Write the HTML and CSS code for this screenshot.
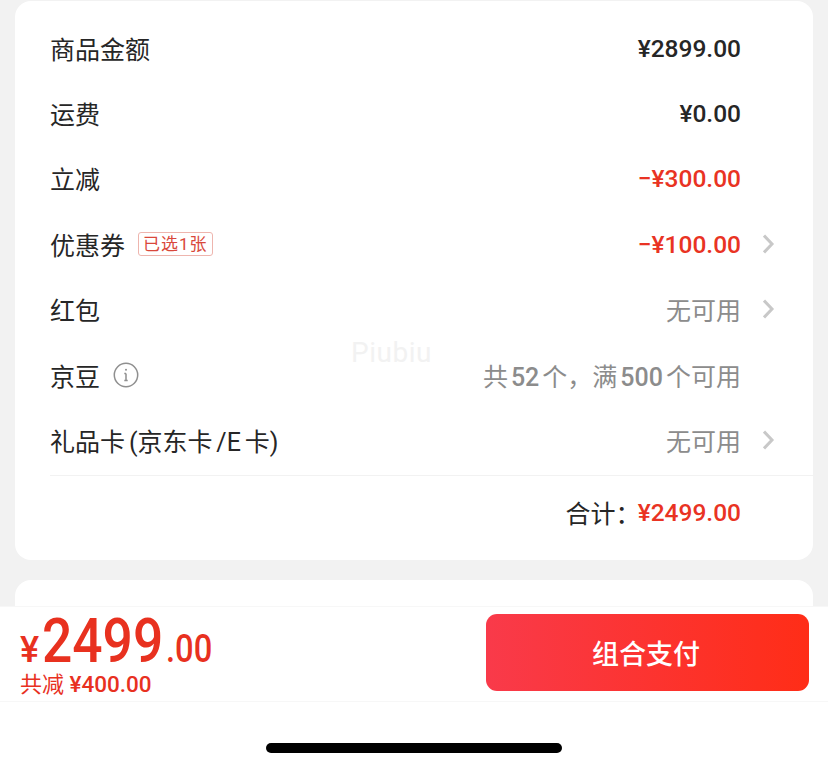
FILE: index.html
```html
<!doctype html>
<html lang="zh-CN">

<head>
  <meta charset="utf-8">
  <meta name="viewport" content="width=device-width, initial-scale=1">
  <title>订单结算</title>
  <link rel="stylesheet" href="styles.css">
</head>

<body>
  <main class="page">
    <section class="card card-price">
      <div class="row">
        <span class="label">商品金额</span>
        <span class="amount">¥2899.00</span>
      </div>
      <div class="row">
        <span class="label">运费</span>
        <span class="amount">¥0.00</span>
      </div>
      <div class="row">
        <span class="label">立减</span>
        <span class="amount red">−¥300.00</span>
      </div>
      <div class="row has-arrow">
        <span class="label">优惠券</span>
        <span class="tag">已选1张</span>
        <span class="amount red">−¥100.00</span>
        <svg class="arrow" viewBox="0 0 12 20"><path d="M1 1.5l8 8.5-8 8.5"/></svg>
      </div>
      <div class="row has-arrow">
        <span class="label">红包</span>
        <span class="hint">无可用</span>
        <svg class="arrow" viewBox="0 0 12 20"><path d="M1 1.5l8 8.5-8 8.5"/></svg>
      </div>
      <div class="row">
        <span class="label">京豆</span>
        <svg class="info" viewBox="0 0 26 26">
          <circle cx="13" cy="13" r="11.7"/>
          <path d="M13 11.5v7M11.3 11.5H13M11.3 18.5h3.4"/>
          <circle class="dot" cx="13" cy="7.8" r="1"/>
        </svg>
        <span class="hint">共<b>52</b>个，满<b>500</b>个可用</span>
      </div>
      <div class="row has-arrow">
        <span class="label label-tight">礼品卡 (京东卡 /E 卡)</span>
        <span class="hint">无可用</span>
        <svg class="arrow" viewBox="0 0 12 20"><path d="M1 1.5l8 8.5-8 8.5"/></svg>
      </div>
      <div class="total">
        <span class="total-label">合计：</span>
        <span class="amount red">¥2499.00</span>
      </div>
      <span class="watermark">Piubiu</span>
    </section>

    <section class="card card-next"></section>

    <footer class="paybar">
      <div class="pay-sum">
        <div class="pay-price"><span class="yen">¥</span><span class="big">2499</span><span class="cents">.00</span></div>
        <div class="pay-off">共减 <span class="off-num">¥400.00</span></div>
      </div>
      <button class="btn-pay">组合支付</button>
    </footer>

    <div class="home-area"><span class="home-bar"></span></div>
  </main>
</body>

</html>
```

FILE: styles.css
```css
html, body {
  margin: 0;
  height: 100%;
  background-color: #f2f2f2;
  font-family: Roboto, "Noto Sans CJK SC", sans-serif;
}

.page {
  display: flex;
  flex-direction: column;
  height: 768px;
  overflow: hidden;
}

.card {
  background-color: #fff;
  margin: 0 15px;
  border-radius: 16px;
}

.card-price {
  position: relative;
  height: 559px;
  margin-top: 1px;
  padding: 14px 0 0 35px;
  box-sizing: border-box;
}

.card-next {
  flex: 1;
  margin-top: 20px;
  border-radius: 16px 16px 0 0;
}

.row {
  display: flex;
  align-items: center;
  height: 65.4px;
  padding-right: 72px;
}

.has-arrow {
  padding-right: 38px;
}

.label {
  font-size: 25px;
  color: #262626;
}

.label-tight {
  word-spacing: -2.3px;
}

.amount {
  margin-left: auto;
  padding-top: 1px;
  font-size: 24.5px;
  font-weight: 500;
  color: #262626;
}

.red {
  color: #e93323;
}

.hint {
  margin-left: auto;
  font-size: 25px;
  color: #8c8c8c;
}

.hint b {
  margin: 0 3px;
  font-weight: 500;
}

.tag {
  margin-left: 13px;
  padding: 0 4px;
  height: 22px;
  line-height: 22px;
  font-size: 17px;
  letter-spacing: 1px;
  color: #d9483b;
  border: 1px solid #eeb5ae;
  border-radius: 3px;
}

.arrow {
  width: 12px;
  height: 20px;
  margin-left: 22px;
  fill: none;
  stroke: #c8c8c8;
  stroke-width: 3;
}

.info {
  width: 26px;
  height: 26px;
  margin-left: 13px;
  fill: none;
  stroke: #8f8f8f;
  stroke-width: 1.5;
}

.info .dot {
  fill: #8f8f8f;
  stroke: none;
}

.total {
  display: flex;
  justify-content: flex-end;
  align-items: center;
  height: 72px;
  margin-top: 2px;
  padding-right: 72px;
  border-top: 1px solid #f2f2f2;
}

.total-label {
  margin-right: -3px;
  font-size: 25px;
  color: #262626;
}

.total .amount {
  margin-left: 0;
}

.watermark {
  position: absolute;
  top: 335px;
  left: 336px;
  font-size: 28px;
  letter-spacing: .5px;
  color: #f2f2f2;
}

.paybar {
  display: flex;
  justify-content: space-between;
  align-items: center;
  height: 96px;
  padding: 0 19px 0 20px;
  box-sizing: border-box;
  background-color: #fff;
  border-top: 1px solid #f7f7f7;
  border-bottom: 1px solid #f7f7f7;
}

.pay-sum {
  color: #e8311f;
}

.pay-price {
  display: flex;
  align-items: baseline;
  height: 56px;
  margin-top: 2px;
}

.yen {
  font-size: 36px;
  font-weight: 500;
}

/* Roboto digits are wider than the price face, so they get squeezed */
.big,
.cents {
  display: inline-block;
  transform-origin: left bottom;
  transform: scaleX(.86);
  font-weight: 500;
}

.big {
  margin-left: 3px;
  margin-right: -20px;
  font-size: 62px;
  line-height: 56px;
}

.cents {
  margin-left: 3px;
  font-size: 38px;
}

.pay-off {
  margin-top: 2px;
  font-size: 22px;
  line-height: 26px;
}

.off-num {
  font-size: 22.5px;
  font-weight: 500;
}

.btn-pay {
  width: 323px;
  height: 77px;
  margin-top: -4px;
  padding-right: 9px;
  border: 0;
  border-radius: 11px;
  background: linear-gradient(90deg, #f93a4a, #ff2d17);
  color: #fff;
  font-family: inherit;
  font-size: 27px;
  font-weight: 500;
}

.home-area {
  display: flex;
  justify-content: center;
  align-items: flex-start;
  height: 66px;
  padding-top: 41px;
  box-sizing: border-box;
  background-color: #fff;
}

.home-bar {
  width: 296px;
  height: 10px;
  border-radius: 5px;
  background-color: #000;
}
```
